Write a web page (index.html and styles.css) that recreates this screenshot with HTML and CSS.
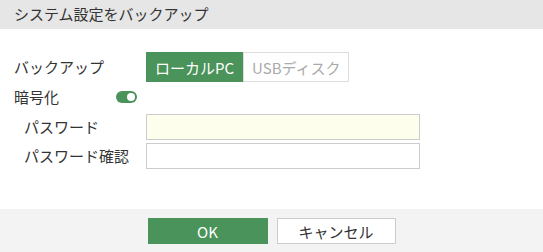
FILE: index.html
```html
<!DOCTYPE html>
<html lang="ja">
<head>
    <meta charset="UTF-8">
    <meta name="viewport" content="width=device-width, initial-scale=1.0">
    <link rel="stylesheet" href="styles.css">
</head>
<body>
    <div class="dialog">
        <div class="title">システム設定をバックアップ</div>
        <div class="content">
            <div class="row">
                <span class="label">バックアップ</span>
                <div class="toggle-group">
                    <button class="seg active">ローカルPC</button>
                    <button class="seg">USBディスク</button>
                </div>
            </div>
            <div class="row row-switch">
                <span class="label short">暗号化</span>
                <span class="switch"><span class="knob"></span></span>
            </div>
            <div class="row row-input">
                <span class="label sub">パスワード</span>
                <input type="password" class="field focus">
            </div>
            <div class="row row-input second">
                <span class="label sub">パスワード確認</span>
                <input type="password" class="field">
            </div>
        </div>
        <div class="footer">
            <button class="btn primary">OK</button>
            <button class="btn">キャンセル</button>
        </div>
    </div>
</body>
</html>
```

FILE: styles.css
```css
body {
    margin: 0;
    font-family: "Noto Sans CJK JP", "Noto Sans", sans-serif;
    color: #333;
    background: #fff;
}

.dialog {
    width: 543px;
    height: 252px;
    display: flex;
    flex-direction: column;
}

.title {
    height: 29px;
    line-height: 27px;
    padding-left: 14px;
    font-size: 15px;
    background-color: #e6e6e6;
}

.content {
    flex: 1;
    padding: 23px 14px 0;
}

.row {
    display: flex;
    align-items: center;
    height: 30px;
}

.label {
    width: 132px;
    font-size: 15px;
    line-height: 20px;
}

.label.short {
    width: 102px;
}

.label.sub {
    width: 122px;
    padding-left: 10px;
}

.toggle-group {
    display: flex;
    height: 30px;
}

.seg {
    font-family: inherit;
    font-size: 15px;
    padding: 0 8px;
    height: 30px;
    border: 1px solid #ddd;
    background: #fff;
    color: #aaa;
}

.seg.active {
    background-color: #4a935a;
    border-color: #4a935a;
    color: #fff;
}

.row-switch {
    margin-top: 2px;
    height: 26px;
}

.switch {
    width: 21px;
    height: 12px;
    border-radius: 6px;
    background-color: #4a935a;
    position: relative;
}

.knob {
    position: absolute;
    right: 2px;
    top: 2px;
    width: 8px;
    height: 8px;
    border-radius: 50%;
    background: #fff;
}

.row-input {
    margin-top: 4px;
    height: 26px;
}

.row-input.second {
    margin-top: 3px;
}

.field {
    width: 274px;
    height: 26px;
    box-sizing: border-box;
    border: 1px solid #ccc;
    background: #fff;
    margin: 0;
}

.field.focus {
    background-color: #fefeec;
}

.footer {
    height: 43px;
    background-color: #f3f3f3;
    display: flex;
    justify-content: center;
    align-items: flex-start;
    padding-top: 9px;
    box-sizing: border-box;
    gap: 9px;
}

.btn {
    font-family: inherit;
    font-size: 15px;
    width: 119px;
    height: 26px;
    border: 1px solid #ccc;
    background: #fff;
    color: #333;
    padding: 0;
}

.btn.primary {
    width: 120px;
    background-color: #4a935a;
    border-color: #4a935a;
    color: #fff;
}
```
